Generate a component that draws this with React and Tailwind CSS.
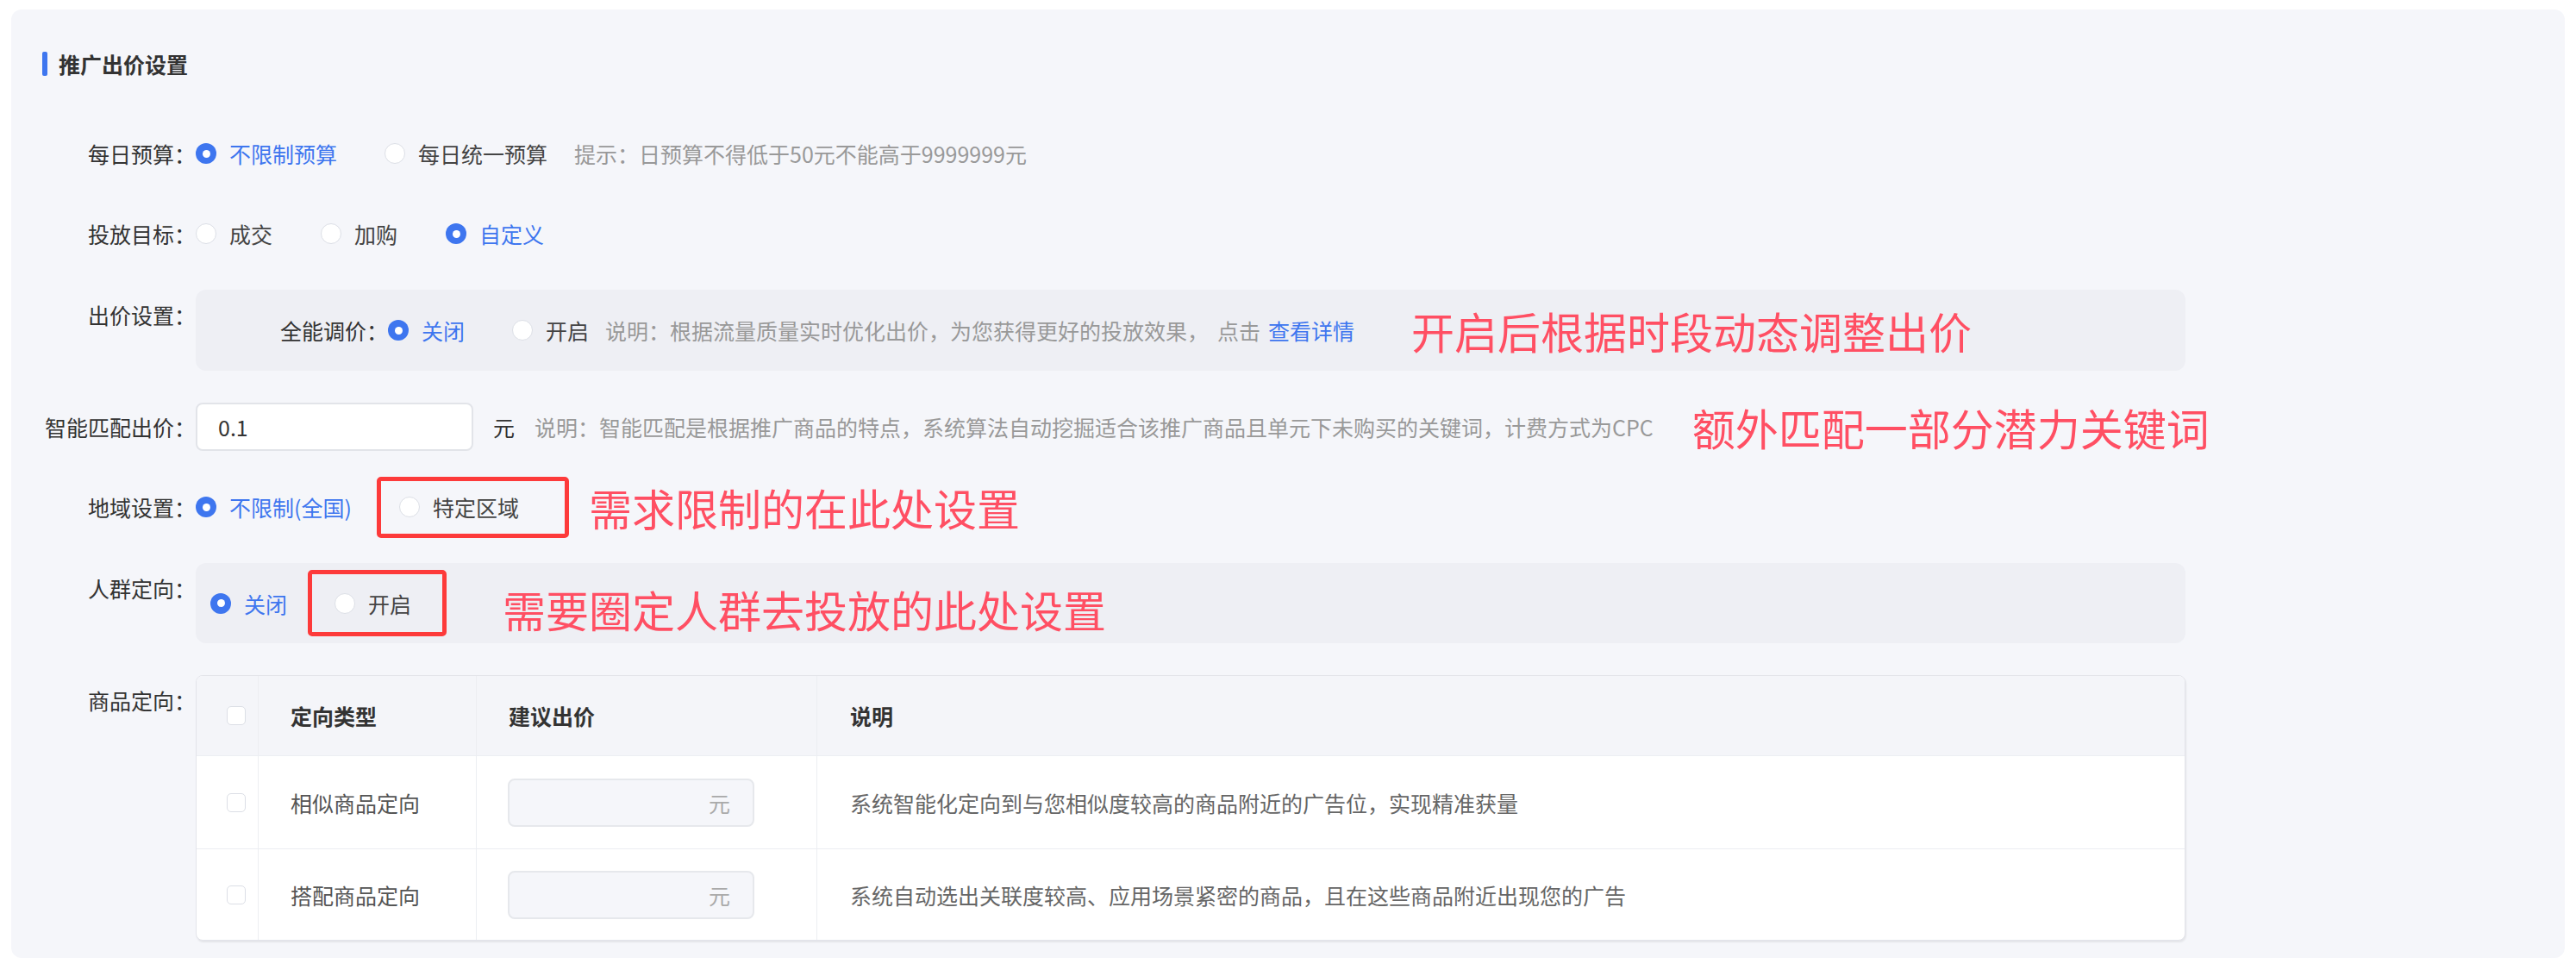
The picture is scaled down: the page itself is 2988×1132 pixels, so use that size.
import React from 'react';

const Radio = ({ checked }) =>
  checked ? (
    <span className="flex h-[24px] w-[24px] shrink-0 items-center justify-center rounded-full bg-[#3e76ef]">
      <span className="h-[9px] w-[9px] rounded-full bg-white" />
    </span>
  ) : (
    <span className="h-[24px] w-[24px] shrink-0 rounded-full border border-[#dcdfe6] bg-white" />
  );

const Option = ({ checked, label, className = '' }) => (
  <span className={`flex items-center ${className}`}>
    <Radio checked={checked} />
    <span className={`ml-[15px] ${checked ? 'text-[#3e76ef]' : 'text-[#444]'}`}>{label}</span>
  </span>
);

// red frame drawn over an option in the screenshot
const Marked = ({ children, className = '', frame }) => (
  <span className={`relative flex items-center ${className}`}>
    {children}
    <span className={`pointer-events-none absolute rounded-[5px] border-[5px] border-[#fd3a3a] ${frame}`} />
  </span>
);

const Note = ({ children, className = '' }) => (
  <span className={`whitespace-nowrap text-[50px] leading-[50px] text-[#ff4f63] ${className}`}>{children}</span>
);

const Row = ({ label, top, children }) => (
  <div className={`flex ${top ? 'items-start' : 'items-center'}`}>
    <div className={`w-[214px] shrink-0 whitespace-nowrap text-right text-[#333] ${top ? 'pt-[11px]' : ''}`}>
      {label}
    </div>
    <div className="min-w-0">{children}</div>
  </div>
);

const Checkbox = () => (
  <span className="block h-[22px] w-[22px] rounded-[5px] border border-[#dcdfe6] bg-white" />
);

const targetRows = [
  { name: '相似商品定向', desc: '系统智能化定向到与您相似度较高的商品附近的广告位，实现精准获量', h: 'h-[108px] border-b border-[#eceef2]' },
  { name: '搭配商品定向', desc: '系统自动选出关联度较高、应用场景紧密的商品，且在这些商品附近出现您的广告', h: 'h-[105px]' },
];

export default function App() {
  return (
    <div className="min-h-screen bg-white pl-[13px] pt-[11px] font-['Noto_Sans_CJK_SC','Noto_Sans',sans-serif] text-[25px] leading-[36px]">
      <div className="w-[2962px] rounded-[12px] bg-[#f5f6fa] pb-[20px] pt-[49px]">
        {/* Title */}
        <div className="flex h-[28px] items-center pl-[36px]">
          <span className="h-[28px] w-[6px] rounded-[2px] bg-[#3e76ef]" />
          <span className="ml-[13px] font-bold text-[#333]">推广出价设置</span>
        </div>

        <div className="mt-[62px] flex flex-col gap-[37px]">
          <Row label="每日预算：">
            <div className="flex h-[56px] items-center whitespace-nowrap">
              <Option checked label="不限制预算" />
              <Option label="每日统一预算" className="ml-[55px]" />
              <span className="ml-[31px] text-[#999]">提示：日预算不得低于50元不能高于9999999元</span>
            </div>
          </Row>

          <Row label="投放目标：">
            <div className="flex h-[56px] items-center whitespace-nowrap">
              <Option label="成交" />
              <Option label="加购" className="ml-[56px]" />
              <Option checked label="自定义" className="ml-[56px]" />
            </div>
          </Row>

          <Row label="出价设置：" top>
            <div className="flex h-[94px] w-[2308px] items-center whitespace-nowrap rounded-[12px] bg-[#eeeff4] pl-[98px]">
              <span className="text-[#333]">全能调价：</span>
              <Option checked label="关闭" />
              <Option label="开启" className="ml-[55px]" />
              <span className="ml-[19px] text-[#999]">
                说明：根据流量质量实时优化出价，为您获得更好的投放效果，
                <span className="ml-[10px]">点击</span>
                <span className="ml-[9px] text-[#3e76ef]">查看详情</span>
              </span>
              <Note className="ml-[66px]">开启后根据时段动态调整出价</Note>
            </div>
          </Row>

          <Row label="智能匹配出价：">
            <div className="flex h-[56px] items-center whitespace-nowrap">
              <div className="flex h-[56px] w-[322px] items-center rounded-[8px] border-2 border-[#e2e4e9] bg-white pl-[24px] text-[#333]">
                0.1
              </div>
              <span className="ml-[23px] text-[#333]">元</span>
              <span className="ml-[23px] text-[#999]">
                说明：智能匹配是根据推广商品的特点，系统算法自动挖掘适合该推广商品且单元下未购买的关键词，计费方式为CPC
              </span>
              <Note className="ml-[45px]">额外匹配一部分潜力关键词</Note>
            </div>
          </Row>

          <Row label="地域设置：">
            <div className="flex h-[56px] items-center whitespace-nowrap">
              <Option checked label="不限制(全国)" />
              <Marked className="ml-[55px]" frame="-left-[26px] -right-[58px] -top-[17px] -bottom-[18px]">
                <Option label="特定区域" />
              </Marked>
              <Note className="ml-[81px]">需求限制的在此处设置</Note>
            </div>
          </Row>

          <Row label="人群定向：" top>
            <div className="flex h-[93px] w-[2308px] items-center whitespace-nowrap rounded-[12px] bg-[#eeeff4] pl-[17px]">
              <Option checked label="关闭" />
              <Marked className="ml-[55px]" frame="-left-[31px] -right-[41px] -top-[21px] -bottom-[20px]">
                <Option label="开启" />
              </Marked>
              <Note className="ml-[106px] mt-[12px]">需要圈定人群去投放的此处设置</Note>
            </div>
          </Row>

          <Row label="商品定向：" top>
            <div className="w-[2308px] overflow-hidden rounded-[8px] border border-[#e3e4ea] bg-white shadow-[1px_2px_2px_rgba(0,0,0,0.07)]">
              <div className="grid h-[93px] grid-cols-[71px_253px_395px_1fr] border-b border-[#eceef2] bg-[#f4f5f9] font-bold text-[#333]">
                <div className="flex items-center pl-[35px]">
                  <Checkbox />
                </div>
                <div className="flex items-center border-l border-[#eceef2] pl-[37px]">定向类型</div>
                <div className="flex items-center border-l border-[#eceef2] pl-[37px]">建议出价</div>
                <div className="flex items-center border-l border-[#eceef2] pl-[38px]">说明</div>
              </div>
              {targetRows.map((r) => (
                <div key={r.name} className={`grid grid-cols-[71px_253px_395px_1fr] ${r.h}`}>
                  <div className="flex items-center pl-[35px]">
                    <Checkbox />
                  </div>
                  <div className="flex items-center border-l border-[#eceef2] pl-[37px] text-[#555]">{r.name}</div>
                  <div className="flex items-center border-l border-[#eceef2] pl-[36px]">
                    <div className="flex h-[56px] w-[286px] items-center justify-end rounded-[8px] border-2 border-[#e6e8ec] bg-[#f5f6fa] pr-[26px] text-[#aaa]">
                      元
                    </div>
                  </div>
                  <div className="flex items-center whitespace-nowrap border-l border-[#eceef2] pl-[38px] text-[#666]">{r.desc}</div>
                </div>
              ))}
            </div>
          </Row>
        </div>
      </div>
    </div>
  );
}
